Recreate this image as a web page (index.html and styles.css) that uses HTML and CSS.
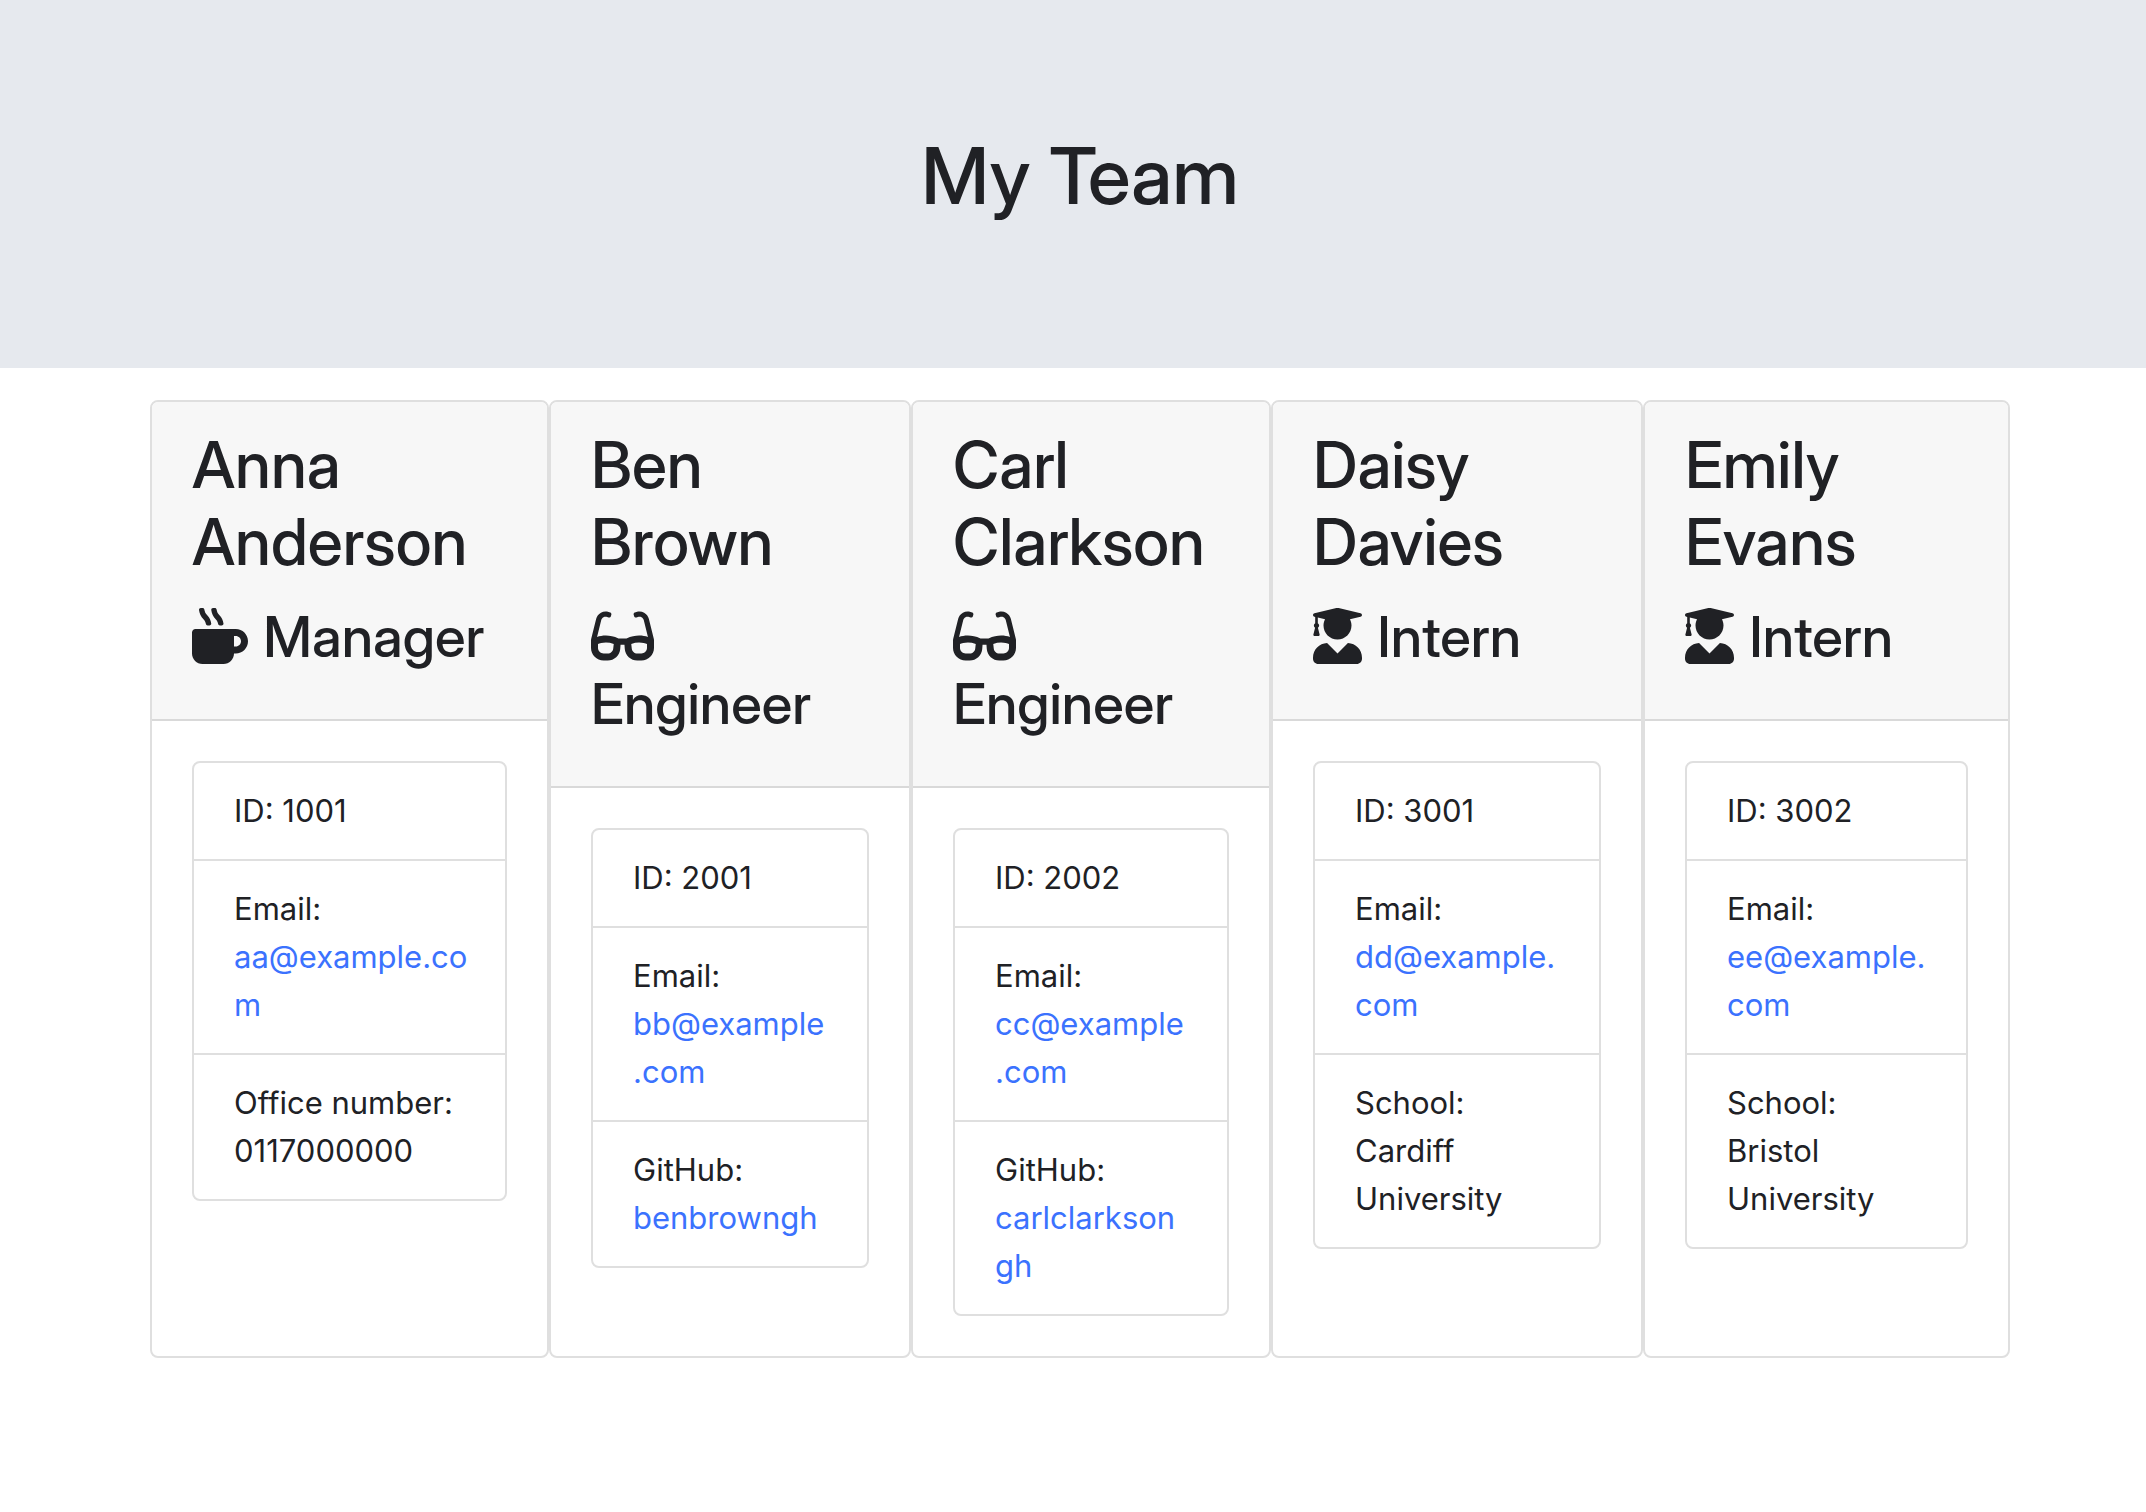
FILE: index.html
```html
<!DOCTYPE html>
<html lang="en">
<head>
  <meta charset="utf-8">
  <meta name="viewport" content="width=device-width, initial-scale=1">
  <title>My Team</title>
  <link rel="stylesheet" href="styles.css">
</head>
<body>
  <svg class="sprite" aria-hidden="true">
    <symbol id="mug" viewBox="0 0 512 512"><path d="M127.1 146.5c1.3 7.7 8 13.5 16 13.5h16.5c9.8 0 17.6-8.5 16.3-18-3.8-28.2-16.4-54.2-36.6-74.7-14.4-14.7-23.6-33.3-26.4-53.5C111.8 5.9 105 0 96.8 0H80.4C70.6 0 63 8.5 64.1 18c3.9 31.9 18 61.3 40.6 84.4 12 12.2 19.7 27.5 22.4 44.1zm112 0c1.3 7.7 8 13.5 16 13.5h16.5c9.8 0 17.6-8.5 16.3-18-3.8-28.2-16.4-54.2-36.6-74.7-14.4-14.7-23.6-33.3-26.4-53.5C223.8 5.9 217 0 208.8 0h-16.4c-9.8 0-17.5 8.5-16.3 18 3.9 31.9 18 61.3 40.6 84.4 12 12.2 19.7 27.5 22.4 44.1zM400 192H32c-17.7 0-32 14.3-32 32v192c0 53 43 96 96 96h192c53 0 96-43 96-96h16c61.8 0 112-50.2 112-112s-50.2-112-112-112zm0 160h-16v-96h16c26.5 0 48 21.5 48 48s-21.5 48-48 48z"/></symbol>
    <symbol id="glasses" viewBox="0 0 576 512"><path d="M574.1 280.4l-45.38-181.8c-5.875-23.63-21.62-44-43-55.75c-21.5-11.75-46.1-14.13-70.25-6.375l-15.25 5.125c-8.375 2.75-12.87 11.88-10 20.25l5 15.13c2.75 8.375 11.88 12.88 20.25 10.13l13.12-4.375c10.88-3.625 23-3.625 33.25 1.75c10.25 5.375 17.5 14.5 20.38 25.75l38.38 153.9c-22.12-6.875-49.75-12.5-81.13-12.5c-34.88 0-73.1 7-114.9 26.75H251.4C210.5 258.6 171.4 251.7 136.5 251.7c-31.38 0-59 5.625-81.12 12.5l38.38-153.9c2.875-11.25 10.12-20.38 20.5-25.75s22.38-5.375 33.25-1.75l13.12 4.375c8.375 2.75 17.5-1.75 20.25-10.13l5-15.13c2.875-8.375-1.625-17.5-10-20.25L160.6 36.5c-23.25-7.75-48.75-5.375-70.13 6.375c-21.37 11.75-37.12 32.12-43 55.75L2 280.4C.75 285.5 .125 290.6 .125 295.9v70.25C.125 428.1 51.63 480 115.3 480h37.12c60.25 0 110.4-46 114.9-105.4l2.875-38.63h35.75l2.875 38.63C313.3 433.1 363.4 480 423.6 480h37.13c63.62 0 115.2-51 115.2-113.9V295.9C576 290.6 575.4 285.5 574.1 280.4zM203.4 369.7c-2 26-24.38 46.25-51 46.25H115.2c-28.25 0-51.25-22.38-51.25-49.88V328.6C78.25 323.1 104 315.7 136.5 315.7c23.38 0 47.38 4.25 71.5 12.88L203.4 369.7zM512 366.1c0 27.5-23 49.88-51.25 49.88h-37.12c-26.62 0-49-20.25-51-46.25L368 328.6c24.13-8.625 48-12.88 71.38-12.88c32.5 0 58.38 7.25 72.63 12.88V366.1z"/></symbol>
    <symbol id="graduate" viewBox="0 0 448 512"><path d="M319.4 320.6L224 416l-95.4-95.4C57.1 323.7 0 382.2 0 454.4v9.6c0 26.5 21.5 48 48 48h352c26.5 0 48-21.5 48-48v-9.6c0-72.2-57.1-130.7-128.6-133.8zM13.6 79.8l6.4 1.5v58.4c-7 4.2-12 11.5-12 20.3 0 8.4 4.6 15.4 11.1 19.7L3.5 242c-1.7 6.9 2.1 14 7.6 14h41.8c5.5 0 9.3-7.1 7.6-14l-15.6-62.3C51.4 175.4 56 168.4 56 160c0-8.8-5-16.1-12-20.3V87.1l66 15.9c-8.6 17.2-14 36.4-14 57 0 70.7 57.3 128 128 128s128-57.3 128-128c0-20.6-5.3-39.8-14-57l96.3-23.2c18.2-4.4 18.2-27.1 0-31.5l-190.4-46c-13-3.1-26.7-3.1-39.7 0L13.6 48.2c-18.1 4.4-18.1 27.2 0 31.6z"/></symbol>
  </svg>

  <header class="banner">
    <h1 class="banner-title">My Team</h1>
  </header>

  <main class="container">
    <div class="team">
      <section class="card">
        <div class="card-header">
          <h2 class="name">Anna Anderson</h2>
          <h3 class="role"><svg class="icon icon-mug" aria-hidden="true"><use href="#mug"/></svg> Manager</h3>
        </div>
        <div class="card-body">
          <ul class="facts">
            <li class="fact">ID: 1001</li>
            <li class="fact">Email: <a class="link" href="mailto:aa@example.com">aa@example.com</a></li>
            <li class="fact">Office number: 0117000000</li>
          </ul>
        </div>
      </section>

      <section class="card">
        <div class="card-header">
          <h2 class="name">Ben Brown</h2>
          <h3 class="role"><svg class="icon icon-glasses" aria-hidden="true"><use href="#glasses"/></svg> Engineer</h3>
        </div>
        <div class="card-body">
          <ul class="facts">
            <li class="fact">ID: 2001</li>
            <li class="fact">Email: <a class="link" href="mailto:bb@example.com">bb@example<wbr>.com</a></li>
            <li class="fact">GitHub: <a class="link" href="https://github.com/benbrowngh">benbrowngh</a></li>
          </ul>
        </div>
      </section>

      <section class="card">
        <div class="card-header">
          <h2 class="name">Carl Clarkson</h2>
          <h3 class="role"><svg class="icon icon-glasses" aria-hidden="true"><use href="#glasses"/></svg> Engineer</h3>
        </div>
        <div class="card-body">
          <ul class="facts">
            <li class="fact">ID: 2002</li>
            <li class="fact">Email: <a class="link" href="mailto:cc@example.com">cc@example<wbr>.com</a></li>
            <li class="fact">GitHub: <a class="link" href="https://github.com/carlclarksongh">carlclarkson<wbr>gh</a></li>
          </ul>
        </div>
      </section>

      <section class="card">
        <div class="card-header">
          <h2 class="name">Daisy Davies</h2>
          <h3 class="role"><svg class="icon icon-graduate" aria-hidden="true"><use href="#graduate"/></svg> Intern</h3>
        </div>
        <div class="card-body">
          <ul class="facts">
            <li class="fact">ID: 3001</li>
            <li class="fact">Email: <a class="link" href="mailto:dd@example.com">dd@example.<wbr>com</a></li>
            <li class="fact">School: Cardiff University</li>
          </ul>
        </div>
      </section>

      <section class="card">
        <div class="card-header">
          <h2 class="name">Emily Evans</h2>
          <h3 class="role"><svg class="icon icon-graduate" aria-hidden="true"><use href="#graduate"/></svg> Intern</h3>
        </div>
        <div class="card-body">
          <ul class="facts">
            <li class="fact">ID: 3002</li>
            <li class="fact">Email: <a class="link" href="mailto:ee@example.com">ee@example.<wbr>com</a></li>
            <li class="fact">School: Bristol University</li>
          </ul>
        </div>
      </section>
    </div>
  </main>
</body>
</html>
```
FILE: styles.css
```css
*,
*::before,
*::after {
  box-sizing: border-box;
}

body {
  margin: 0;
  background: #fff;
  color: #202125;
  font-family: Inter, "Liberation Sans", sans-serif;
  font-size: 31px;
  line-height: 48px;
}

.sprite {
  display: none;
}

.banner {
  margin-bottom: 32px;
  padding: 128px 0 144px 14px;
  background: #e6e9ee;
  text-align: center;
}

.banner-title,
.name,
.role {
  font-family: "Inter Display", Inter, "Liberation Sans", sans-serif;
  font-weight: 500;
}

.banner-title {
  margin: 0;
  font-size: 78px;
  line-height: 96px;
}

.container {
  padding-left: 14px;
}

.team {
  display: grid;
  grid-template-columns: 399fr 362fr 360fr 372fr 367fr;
  max-width: 1860px;
  margin: 0 auto;
}

.card {
  min-width: 0;
  border: 2px solid #dfdfdf;
  border-radius: 8px;
  background: #fff;
  overflow: hidden;
}

.card-header {
  padding: 24px 40px;
  border-bottom: 2px solid #d9d9d9;
  background: #f7f7f7;
}

.name {
  margin: 0 0 24px;
  font-size: 64px;
  line-height: 77px;
}

.role {
  margin: 0 0 24px;
  font-size: 56px;
  line-height: 67px;
}

.icon {
  height: 56px;
  margin-right: 2px;
  fill: currentColor;
  vertical-align: -7px;
}

.icon-mug {
  width: 56px;
}

.icon-glasses {
  width: 63px;
}

.icon-graduate {
  width: 49px;
}

.card-body {
  padding: 40px;
}

.facts {
  margin: 0;
  padding: 0;
  border: 2px solid #dfdfdf;
  border-radius: 8px;
  list-style: none;
}

.fact {
  padding: 24px 36px 24px 40px;
  overflow-wrap: anywhere;
}

.fact + .fact {
  border-top: 2px solid #dfdfdf;
}

.link {
  color: #3b72fe;
  text-decoration: none;
}
```
